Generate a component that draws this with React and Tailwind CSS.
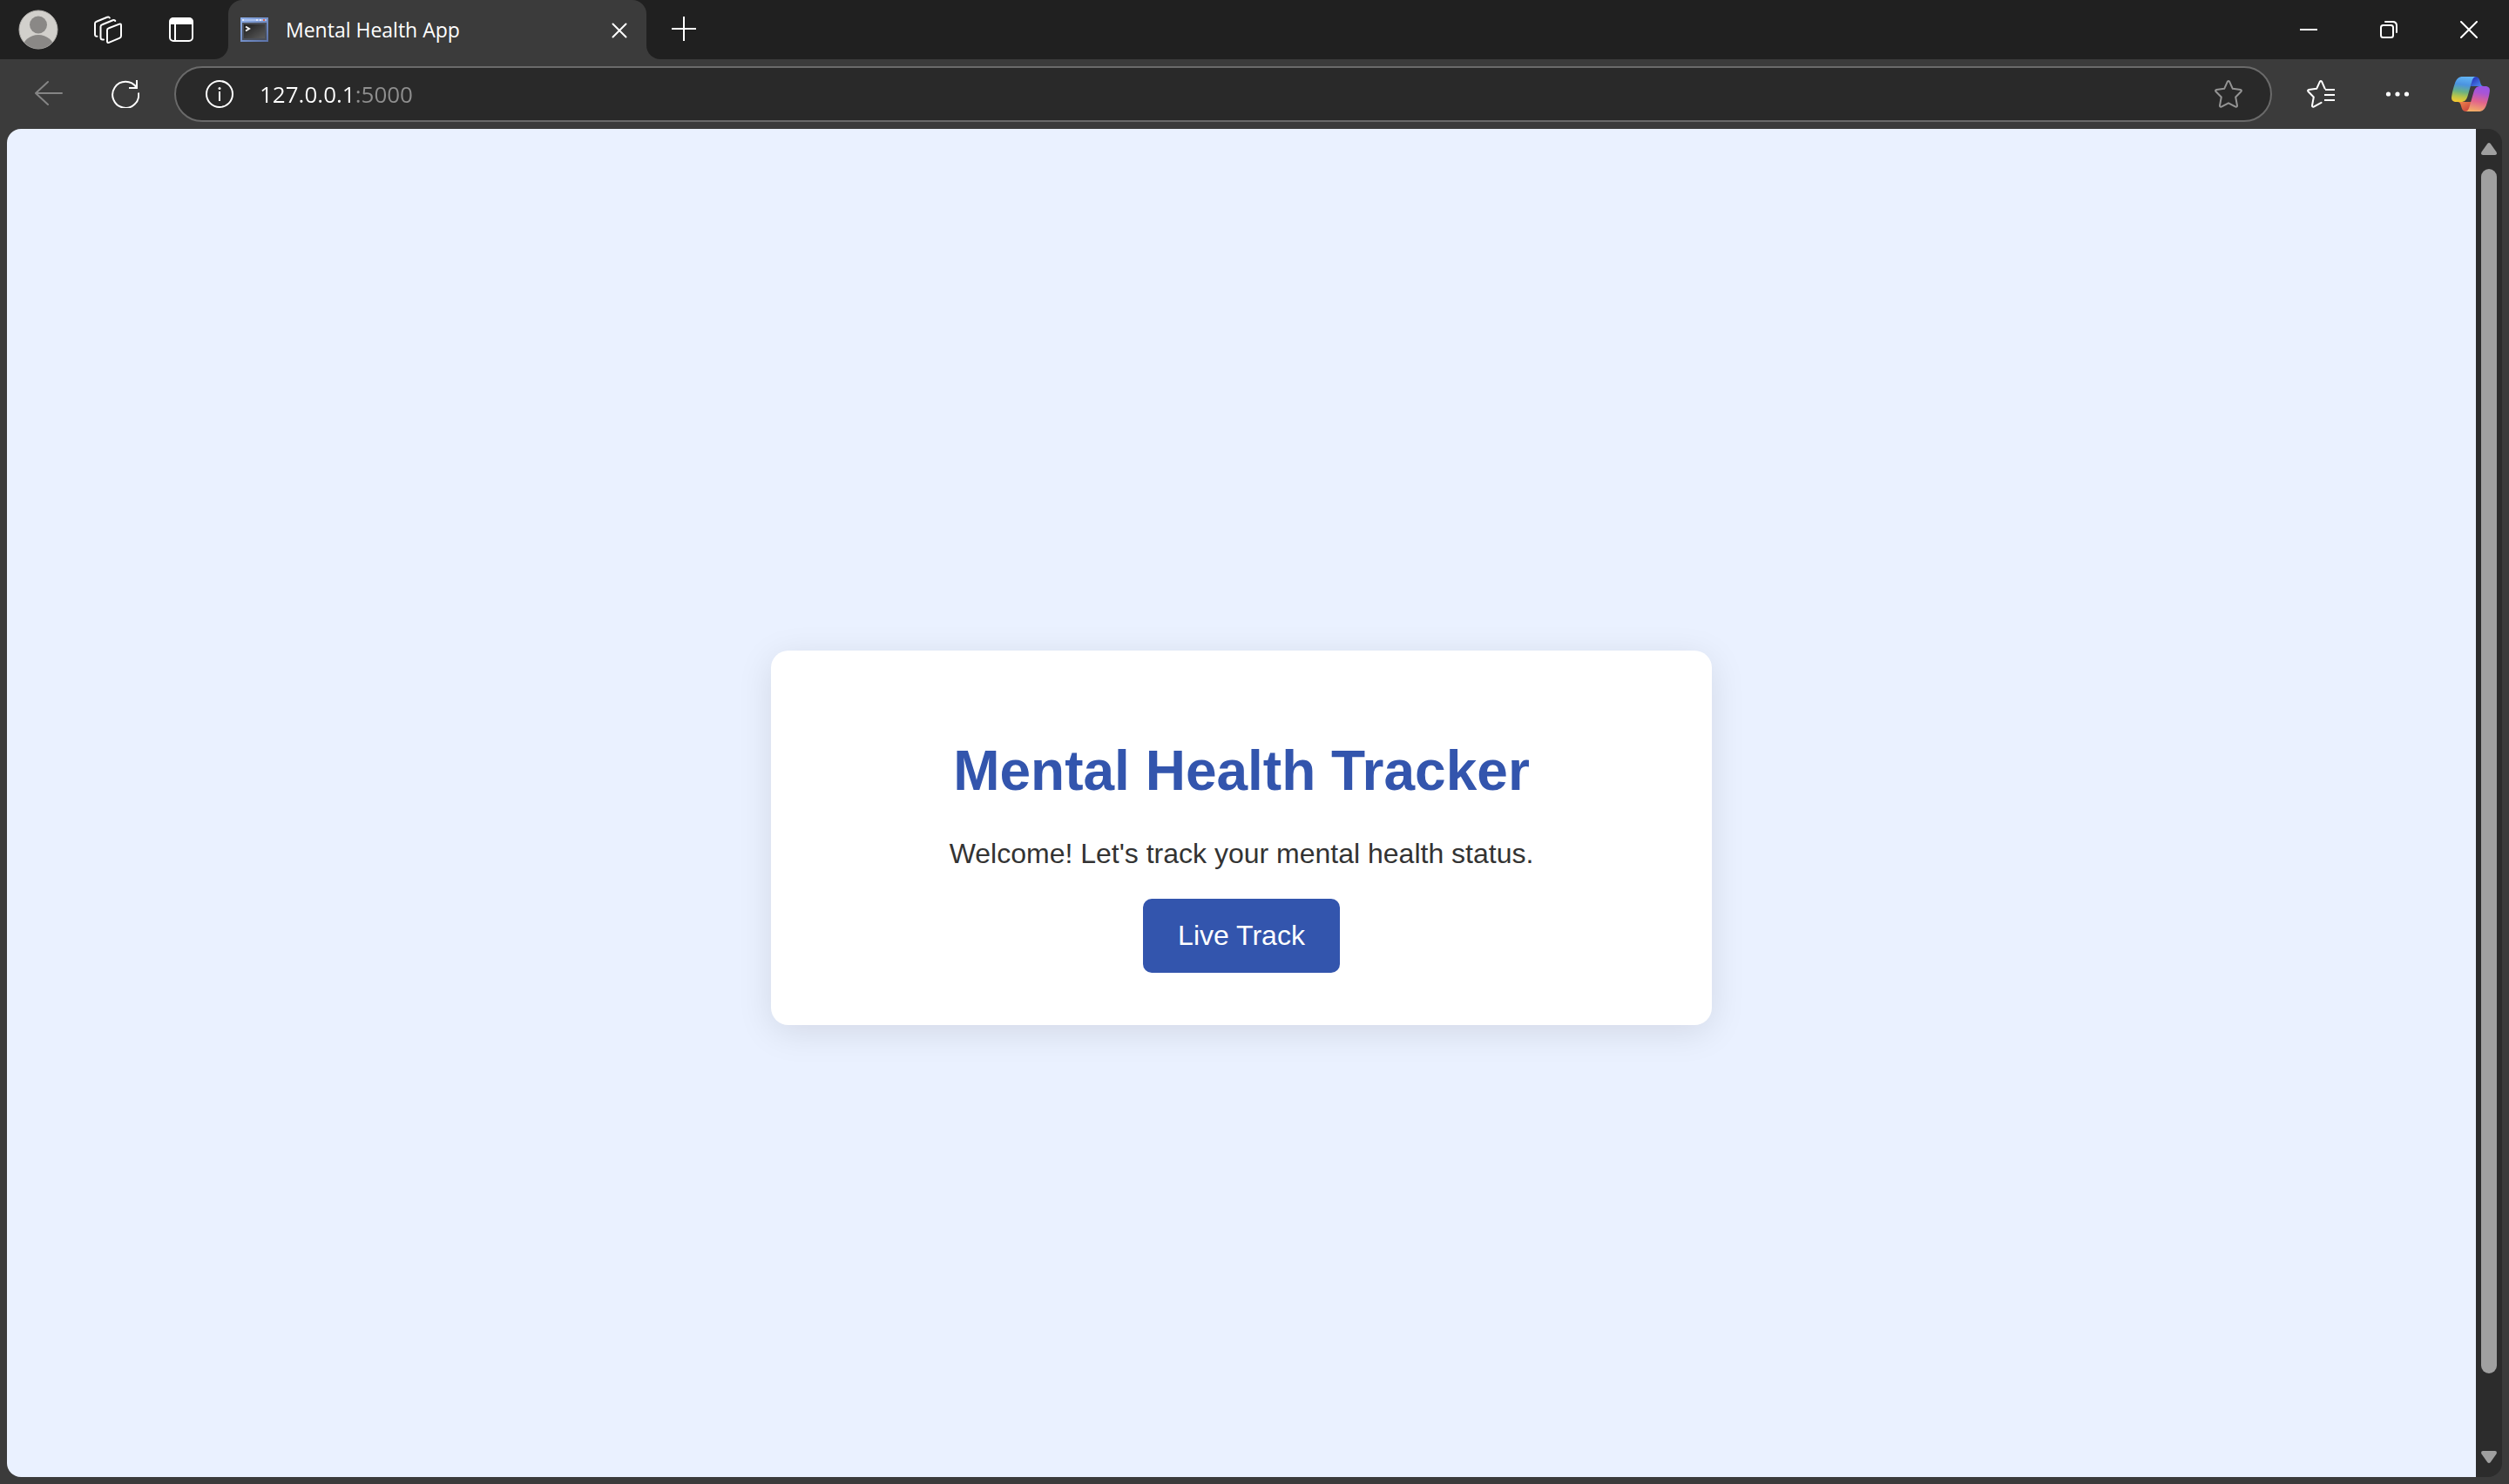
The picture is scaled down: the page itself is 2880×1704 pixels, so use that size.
const iconButton = "flex h-full shrink-0 items-center justify-center text-white";

function Stroke({ className = "size-8", box = "0 0 32 32", width = 2, children }) {
  return (
    <svg
      className={className}
      viewBox={box}
      fill="none"
      stroke="currentColor"
      strokeWidth={width}
      strokeLinecap="round"
      strokeLinejoin="round"
      aria-hidden="true"
    >
      {children}
    </svg>
  );
}

function Avatar() {
  return (
    <svg className="size-[46px]" viewBox="0 0 46 46" aria-hidden="true">
      <clipPath id="avatar-clip">
        <circle cx="23" cy="23" r="22" />
      </clipPath>
      <circle cx="23" cy="23" r="22" fill="#d2d0cc" stroke="#b3b1ae" />
      <g clipPath="url(#avatar-clip)" fill="#8a8886">
        <circle cx="23" cy="17.5" r="10" />
        <ellipse cx="23" cy="44" rx="18" ry="15" />
      </g>
    </svg>
  );
}

function ConsoleIcon() {
  return (
    <svg className="h-7 w-8" viewBox="0 0 32 28" aria-hidden="true">
      <defs>
        <linearGradient id="frame" x1="0" y1="0" x2="1" y2="1">
          <stop offset="0" stopColor="#8fb0ea" />
          <stop offset="1" stopColor="#5a70a6" />
        </linearGradient>
        <linearGradient id="screen" x1="0" y1="0" x2="1" y2="1">
          <stop offset="0" stopColor="#1d1d1d" />
          <stop offset="1" stopColor="#5c5c5c" />
        </linearGradient>
      </defs>
      <path fill="url(#frame)" d="M0 0h32v28H0z" />
      <path fill="#a9c0ee" d="M2 2h28v2H2z" />
      <path fill="#dfe8fb" d="M2 2h2v2H2zM18 2h2v2h-2zM22 2h2v2h-2z" />
      <path fill="#e2664a" d="M26 2h2v2h-2z" />
      <path fill="#4a4f5a" d="M2 6h28v20H2z" />
      <path fill="url(#screen)" d="M4 8h24v16H4z" />
      <path fill="none" stroke="#f2f2f2" strokeWidth="2" d="M6 10.5l4 2.5-4 2.5" />
    </svg>
  );
}

function CopilotIcon() {
  return (
    <svg className="h-10 w-11" viewBox="0 0 44 40" aria-hidden="true">
      <defs>
        <linearGradient id="cp-left" x1="0.55" y1="0" x2="0.4" y2="1">
          <stop offset="0" stopColor="#62b5f5" />
          <stop offset="0.32" stopColor="#4b93e0" />
          <stop offset="0.6" stopColor="#69b184" />
          <stop offset="0.8" stopColor="#b5c44c" />
          <stop offset="1" stopColor="#f2c832" />
        </linearGradient>
        <linearGradient id="cp-top" x1="0" y1="0" x2="1" y2="1">
          <stop offset="0.2" stopColor="#2b3cc0" />
          <stop offset="1" stopColor="#4f95f0" />
        </linearGradient>
        <linearGradient id="cp-right" x1="0.6" y1="0" x2="0.4" y2="1">
          <stop offset="0" stopColor="#9a55e6" />
          <stop offset="0.25" stopColor="#a955d4" />
          <stop offset="0.6" stopColor="#e2648c" />
          <stop offset="1" stopColor="#f2ae66" />
        </linearGradient>
        <linearGradient id="cp-bottom" x1="0" y1="0" x2="1" y2="1">
          <stop offset="0" stopColor="#f08a4c" />
          <stop offset="1" stopColor="#c23a3c" />
        </linearGradient>
      </defs>
      <path fill="url(#cp-top)" d="M24 0h3c3 0 4.500 1.500 5.300 4l1.200 4c.7 2 1.500 3 3.500 3H22z" />
      <path fill="url(#cp-bottom)" d="M20 40h-3c-3 0-4.500-1.500-5.300-4l-1.200-4c-.7-2-1.500-3-3.500-3h16z" />
      <path fill="url(#cp-left)" d="M28.500 0c-2.500 0-4 1.800-4.800 4.500L18.500 22.500C17 27 15 29 11 29H5.500C1.500 29-.6 27 .2 22.500c.6-4.500 1.900-9.500 3.600-14.500C5.600 2.500 8.200 0 13 0z" />
      <path fill="url(#cp-right)" d="M15.500 40c2.500 0 4-1.800 4.800-4.500L25.500 17.500C27 13 29 11 33 11h5.500c4 0 6.100 2 5.300 6.500-.6 4.500-1.900 9.500-3.600 14.500-1.800 5.500-4.400 8-9.200 8z" />
    </svg>
  );
}

function Tab() {
  return (
    <div className="relative ml-1.5 flex h-full w-[480px] items-center rounded-t-2xl bg-[#3b3b3b] pr-[15px] pl-3.5">
      <span className="absolute right-full bottom-0 size-4 bg-[#3b3b3b]">
        <span className="block size-4 rounded-br-2xl bg-[#202020]" />
      </span>
      <span className="absolute bottom-0 left-full size-4 bg-[#3b3b3b]">
        <span className="block size-4 rounded-bl-2xl bg-[#202020]" />
      </span>
      <ConsoleIcon />
      <span className="ml-5 flex-1 text-[23px] leading-8 text-white">Mental Health App</span>
      <button type="button" aria-label="Close tab" className="flex size-8 items-center justify-center text-white">
        <Stroke className="mt-0.5 size-[18px]" box="0 0 18 18">
          <path d="M1.500 1.500l15 15M16.500 1.500l-15 15" />
        </Stroke>
      </button>
    </div>
  );
}

function TitleBar() {
  return (
    <header className="flex h-17 items-center bg-[#202020]">
      <button type="button" aria-label="Profile" className={`${iconButton} w-22`}>
        <Avatar />
      </button>
      <button type="button" aria-label="Workspaces" className={`${iconButton} w-18`}>
        <Stroke>
          <path d="M17 14.200l12-4.600q2-.7 2 1.300v12.400q0 1.700-1.500 2.300L17 30.800q-2 .7-2-1.300V16.500q0-1.700 2-2.300z" />
          <path d="M11 27.500H10q-2.500 0-2.500-2.500V12.500q0-1.700 1.800-2.300L21.500 5.200q2.200-.6 2.800.8" />
          <path d="M3.500 23.800Q1 24 1 21.500V9q0-1.700 1.800-2.300L15 1.700q2.200-.7 2.800.8" />
        </Stroke>
      </button>
      <button type="button" aria-label="Tab actions" className={`${iconButton} w-24`}>
        <Stroke className="size-7" box="0 0 28 28">
          <rect x="1" y="1" width="26" height="26" rx="4" />
          <path fill="currentColor" d="M1.500 7V4.500q0-3 3-3h19q3 0 3 3V7z" />
          <path d="M7 7v20" />
        </Stroke>
      </button>
      <Tab />
      <button type="button" aria-label="New tab" className={`${iconButton} w-[86px]`}>
        <Stroke className="mb-0.5 size-7" box="0 0 28 28">
          <path strokeLinecap="butt" d="M14 0v28M0 14h28" />
        </Stroke>
      </button>
      <div className="ml-auto flex h-full">
        <button type="button" aria-label="Minimize" className={`${iconButton} w-23`}>
          <Stroke className="size-5" box="0 0 20 20">
            <path strokeLinecap="butt" d="M0 10h20" />
          </Stroke>
        </button>
        <button type="button" aria-label="Restore" className={`${iconButton} w-23`}>
          <Stroke className="size-5" box="0 0 20 20">
            <rect x="1" y="5" width="14" height="14" rx="2.500" />
            <path d="M6 1h8.500Q19 1 19 5.500V13" />
          </Stroke>
        </button>
        <button type="button" aria-label="Close window" className={`${iconButton} w-23`}>
          <Stroke className="size-5" box="0 0 20 20">
            <path d="M1 1l18 18M19 1L1 19" />
          </Stroke>
        </button>
      </div>
    </header>
  );
}

function Toolbar() {
  return (
    <nav className="flex h-20 items-center bg-[#3b3b3b]">
      <button type="button" aria-label="Back" className="ml-3 flex h-full w-22 shrink-0 items-center justify-center text-[#858585]">
        <Stroke>
          <path d="M15 2L1 15l14 13M1 15h30" />
        </Stroke>
      </button>
      <button type="button" aria-label="Refresh" className={`${iconButton} w-22`}>
        <Stroke>
          <path strokeLinecap="butt" strokeLinejoin="miter" d="M31 14.500A15 15 0 1 1 28.500 8.300M29 0v9h-9" />
        </Stroke>
      </button>
      <div className="ml-3 flex h-16 flex-1 items-center rounded-full border-2 border-[#6a6a6a] bg-[#292929] px-4">
        <button type="button" aria-label="Site information" className={`${iconButton} w-17`}>
          <Stroke>
            <circle cx="16" cy="16" r="15" />
            <path strokeLinecap="butt" d="M16 13v11" />
            <circle cx="16" cy="9.500" r="1.500" fill="currentColor" stroke="none" />
          </Stroke>
        </button>
        <input
          type="text"
          aria-label="Address"
          defaultValue="127.0.0.1:5000"
          className="ml-3 min-w-0 flex-1 bg-[linear-gradient(to_right,#ffffff_107px,#8f8f8f_107px)] bg-clip-text text-[26px] leading-9 text-transparent outline-none"
        />
        <button type="button" aria-label="Add to favorites" className="flex h-full w-16 items-center justify-center text-[#949494]">
          <Stroke>
            <path d="M14.800 1.900Q16 .2 17.200 1.900L20.800 9.800L29.800 11Q31.800 11.600 30.300 13.300L24.200 19.500L26 29.200Q26 31.200 24.200 30.600L16 26.300L7.800 30.600Q6 31.200 6 29.200L7.800 19.500L1.700 13.300Q.2 11.600 2.200 11L11.200 9.800Z" />
          </Stroke>
        </button>
      </div>
      <button type="button" aria-label="Favorites" className={`${iconButton} ml-2 w-24`}>
        <Stroke>
          <path d="M16.500 25.800L7.800 30.600Q6 31.200 6 29.200L7.800 19.500L1.700 13.300Q.2 11.600 2.200 11L11.200 9.800L14.800 1.900Q16 .2 17.200 1.900L20.600 9.600" />
          <path strokeLinecap="butt" d="M21 11h11M20 17h12M20 23h12" />
        </Stroke>
      </button>
      <button type="button" aria-label="Settings and more" className={`${iconButton} w-20`}>
        <svg className="h-8 w-7" viewBox="0 0 28 32" fill="currentColor" aria-hidden="true">
          <circle cx="3.500" cy="16" r="2.600" />
          <circle cx="14" cy="16" r="2.600" />
          <circle cx="24.500" cy="16" r="2.600" />
        </svg>
      </button>
      <button type="button" aria-label="Copilot" className={`${iconButton} w-22`}>
        <CopilotIcon />
      </button>
    </nav>
  );
}

function ScrollBar() {
  return (
    <div className="flex w-[30px] shrink-0 flex-col items-center rounded-r-2xl bg-[#2c2c2c] py-4">
      <svg className="h-3.5 w-[18px]" viewBox="0 0 18 14" fill="#a0a0a0" aria-hidden="true">
        <path d="M7.200 1Q9-1 10.800 1L17.500 10.500Q18.800 14 16 14H2Q-.8 14 .5 10.500Z" />
      </svg>
      <div className="my-4 w-[18px] flex-1">
        <div className="h-[95%] rounded-full bg-[#a0a0a0]" />
      </div>
      <svg className="h-3.5 w-[18px]" viewBox="0 0 18 14" fill="#a0a0a0" aria-hidden="true">
        <path d="M7.200 13Q9 15 10.800 13L17.500 3.500Q18.800 0 16 0H2Q-.8 0 .5 3.500Z" />
      </svg>
    </div>
  );
}

export default function App() {
  return (
    <div className="flex min-h-screen flex-col bg-[#3b3b3b] font-['Open_Sans',sans-serif]">
      <TitleBar />
      <Toolbar />
      <div className="flex flex-1 px-2 pb-2">
        <main className="flex flex-1 items-center justify-center rounded-l-2xl bg-[#eaf1ff] pt-20 font-['Liberation_Sans',sans-serif]">
          <section className="flex w-full max-w-[1080px] flex-col items-center rounded-[20px] bg-white px-15 pt-[101px] pb-15 text-center shadow-[0_8px_40px_rgba(0,0,0,0.1)]">
            <h1 className="text-[64px] leading-[74px] font-bold text-[#3355ad]">Mental Health Tracker</h1>
            <p className="mt-10 text-[32px] leading-9 text-[#333333]">Welcome! Let's track your mental health status.</p>
            <button type="button" className="mt-[34px] rounded-[10px] bg-[#3355ad] px-10 py-6 text-[32px] leading-[37px] text-white">
              Live Track
            </button>
          </section>
        </main>
        <ScrollBar />
      </div>
    </div>
  );
}
